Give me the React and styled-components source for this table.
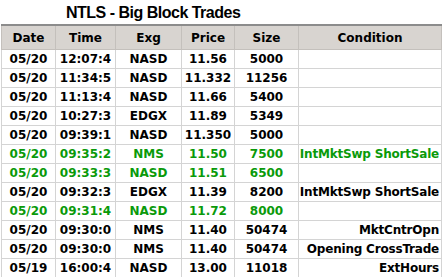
import React from 'react';
import styled, { createGlobalStyle } from 'styled-components';

const GlobalStyle = createGlobalStyle`
    body {
        margin: 0;
        background: #ffffff;
        font-family: "DejaVu Sans", Verdana, sans-serif;
    }
`;

const Wrapper = styled.div`
    width: 442px;
    height: 277px;
    overflow: hidden;
    background: #ffffff;
`;

const Title = styled.div`
    height: 24px;
    line-height: 25px;
    padding-left: 66px;
    font-family: "Liberation Sans", Arial, sans-serif;
    font-weight: bold;
    font-size: 16px;
    letter-spacing: -0.5px;
    color: #000000;
`;

const Table = styled.table`
    width: 440px;
    margin-left: 1px;
    border-collapse: collapse;
    table-layout: fixed;
    border-top: 2px solid #8c8c8c;
    border-left: 1px solid #8c8c8c;
`;

const HeadCell = styled.th`
    height: 23px;
    padding: 0;
    background: #d8d4d0;
    border: 1px solid #c4c0bc;
    font-size: 12px;
    font-weight: bold;
    color: #000000;
    text-align: center;
`;

const Cell = styled.td`
    height: 18px;
    padding: 0 ${props => (props.align === 'right' ? '2px' : '0')} 0 0;
    border: 1px solid #d4d4d4;
    font-size: 12px;
    font-weight: bold;
    white-space: nowrap;
    overflow: hidden;
    letter-spacing: ${props => (props.align === 'right' ? '-0.2px' : '0')};
    text-align: ${props => props.align || 'center'};
    color: ${props => (props.green ? '#0a9a0a' : '#000000')};
`;

const columns = [
    { label: 'Date', width: 54 },
    { label: 'Time', width: 60 },
    { label: 'Exg', width: 66 },
    { label: 'Price', width: 53 },
    { label: 'Size', width: 64 },
    { label: 'Condition', width: 143 },
];

const trades = [
    ['05/20', '12:07:4', 'NASD', '11.56', '5000', '', false],
    ['05/20', '11:34:5', 'NASD', '11.332', '11256', '', false],
    ['05/20', '11:13:4', 'NASD', '11.66', '5400', '', false],
    ['05/20', '10:27:3', 'EDGX', '11.89', '5349', '', false],
    ['05/20', '09:39:1', 'NASD', '11.350', '5000', '', false],
    ['05/20', '09:35:2', 'NMS', '11.50', '7500', 'IntMktSwp ShortSale', true],
    ['05/20', '09:33:3', 'NASD', '11.51', '6500', '', true],
    ['05/20', '09:32:3', 'EDGX', '11.39', '8200', 'IntMktSwp ShortSale', false],
    ['05/20', '09:31:4', 'NASD', '11.72', '8000', '', true],
    ['05/20', '09:30:0', 'NMS', '11.40', '50474', 'MktCntrOpn', false],
    ['05/20', '09:30:0', 'NMS', '11.40', '50474', 'Opening CrossTrade', false],
    ['05/19', '16:00:4', 'NASD', '13.00', '11018', 'ExtHours', false],
];

const App = () => {
    return (
        <Wrapper>
            <GlobalStyle />
            <Title>NTLS - Big Block Trades</Title>
            <Table>
                <colgroup>
                    {columns.map(col => (
                        <col key={col.label} style={{ width: col.width }} />
                    ))}
                </colgroup>
                <thead>
                    <tr>
                        {columns.map(col => (
                            <HeadCell key={col.label}>{col.label}</HeadCell>
                        ))}
                    </tr>
                </thead>
                <tbody>
                    {trades.map((t, i) => (
                        <tr key={i}>
                            <Cell green={t[6]}>{t[0]}</Cell>
                            <Cell green={t[6]}>{t[1]}</Cell>
                            <Cell green={t[6]}>{t[2]}</Cell>
                            <Cell green={t[6]}>{t[3]}</Cell>
                            <Cell green={t[6]}>{t[4]}</Cell>
                            <Cell green={t[6]} align="right">{t[5]}</Cell>
                        </tr>
                    ))}
                </tbody>
            </Table>
        </Wrapper>
    );
};

export default App;
